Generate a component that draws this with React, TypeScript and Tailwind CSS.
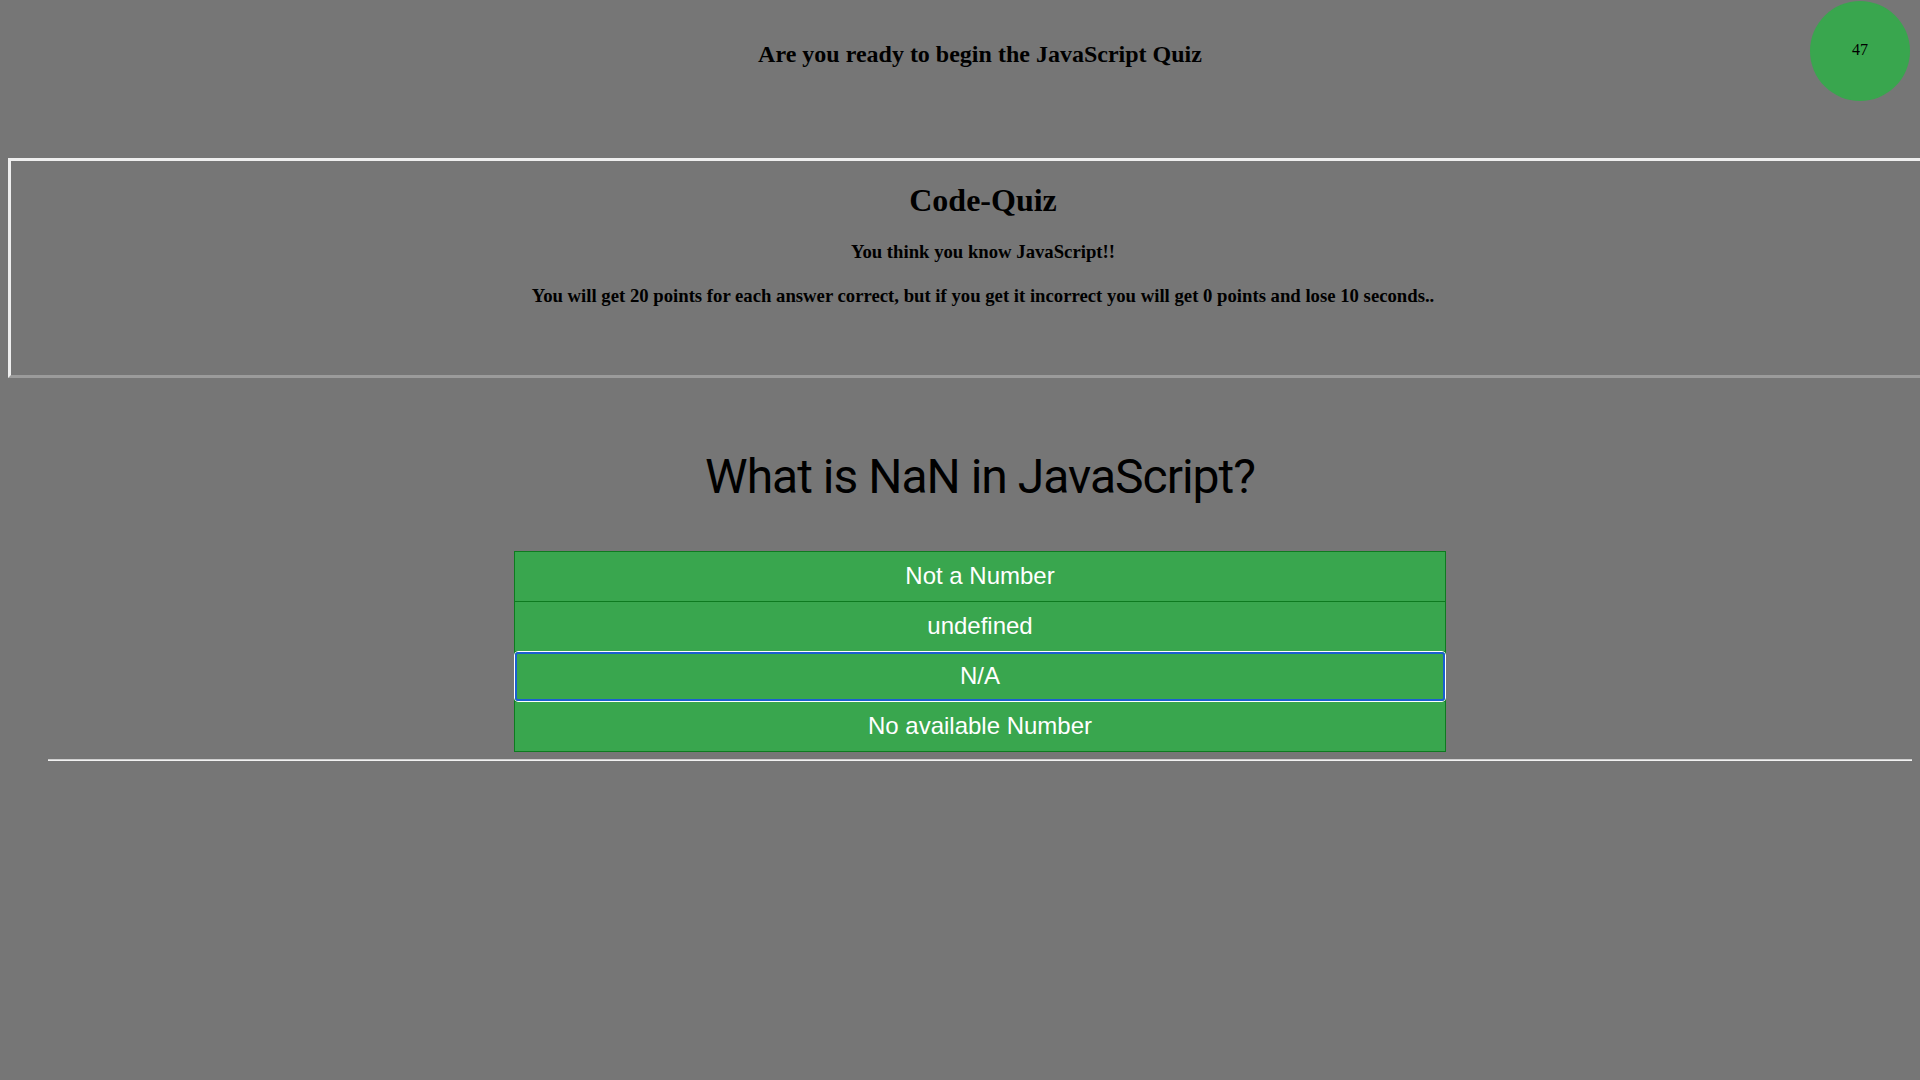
import React from "react";

const answers = ["Not a Number", "undefined", "N/A", "No available Number"];

export default function App() {
  return (
    <div className="relative w-screen h-screen overflow-hidden bg-[#767676] text-black">
      <div className="absolute top-[1px] left-[1810px] w-[100px] h-[100px] rounded-full bg-[#39a64e] flex items-center justify-center font-['Liberation_Serif',serif] text-[16px] leading-[18px] pb-[3px]">
        47
      </div>
      <div className="w-[1944px] ml-[8px]">
        <header className="h-[158px] pt-[40px]">
          <h2 className="text-center font-['Liberation_Serif',serif] font-bold text-[24px] leading-[28px]">
            Are you ready to begin the JavaScript Quiz
          </h2>
        </header>
        <section className="w-[1950px] h-[220px] border-[3px] border-t-[#efefef] border-l-[#efefef] border-b-[#9b9b9b] border-r-[#9b9b9b] pt-[21px] font-['Liberation_Serif',serif] text-center">
          <h1 className="font-bold text-[32px] leading-[37px]">Code-Quiz</h1>
          <h3 className="mt-[22px] font-bold text-[18.72px] leading-[22px]">You think you know JavaScript!!</h3>
          <h3 className="mt-[22px] font-bold text-[18.72px] leading-[22px]">
            You will get 20 points for each answer correct, but if you get it incorrect you will get 0 points and lose 10 seconds..
          </h3>
        </section>
        <main className="pt-[71px]">
          <h2 className="text-center font-['Roboto',sans-serif] font-normal text-[48px] leading-[56px] tracking-[-1px]">
            What is NaN in JavaScript?
          </h2>
          <div className="mt-[46px] w-[932px] mx-auto flex flex-col">
            {answers.map((a, i) => (
              <div
                key={a}
                className={
                  "relative h-[51px] border border-[#0e7a20] bg-[#39a64e] flex items-center justify-center pb-[2px] font-['Liberation_Sans',Arial,sans-serif] text-[24px] leading-[28px] text-white " +
                  (i > 0 ? "-mt-px " : "") +
                  (i === 2 ? "z-10" : "")
                }
              >
                {a}
                {i === 2 && (
                  <>
                    <div className="absolute -inset-px rounded-[4px] border border-white" />
                    <div className="absolute inset-0 rounded-[3px] border-2 border-[#1b5fd0]" />
                  </>
                )}
              </div>
            ))}
          </div>
          <div className="mt-[7px] mx-[40px] h-[2px] border-t border-t-[#cfcfcf] border-b border-b-[#f2f2f2]" />
        </main>
      </div>
    </div>
  );
}
